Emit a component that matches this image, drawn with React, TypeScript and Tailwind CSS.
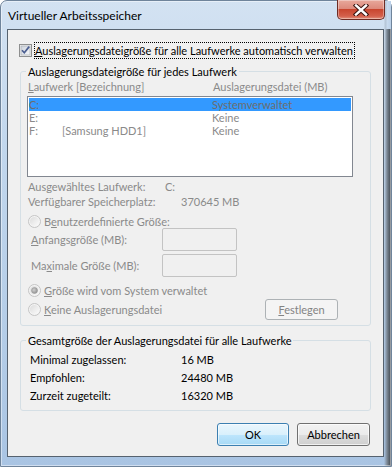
import React from "react";

function CheckBox() {
  return (
    <svg width="13" height="13" viewBox="0 0 13 13" className="shrink-0">
      <defs>
        <linearGradient id="cbg" x1="0" y1="0" x2="1" y2="1">
          <stop offset="0" stopColor="#cdd3dc" />
          <stop offset="1" stopColor="#f7f8fa" />
        </linearGradient>
      </defs>
      <rect x="0.5" y="0.5" width="12" height="12" fill="#f4f4f4" stroke="#8e8f8f" />
      <rect x="2" y="2" width="9" height="9" fill="url(#cbg)" stroke="#aeb3b9" strokeWidth="0.8" />
      <path d="M3 6.2 L5.3 8.8 L10.2 2.6" stroke="#4b5e90" strokeWidth="1.7" fill="none" strokeLinejoin="miter" />
    </svg>
  );
}

function Radio({ checked }: { checked?: boolean }) {
  return (
    <svg width="13" height="13" viewBox="0 0 13 13" className="shrink-0">
      <defs>
        <linearGradient id={checked ? "rgc" : "rgu"} x1="0" y1="0" x2="1" y2="1">
          <stop offset="0" stopColor="#dcdcdc" />
          <stop offset="1" stopColor="#fbfbfb" />
        </linearGradient>
        <radialGradient id="rdot" cx="0.4" cy="0.4" r="0.7">
          <stop offset="0" stopColor="#d0d0d0" />
          <stop offset="1" stopColor="#8a8a8a" />
        </radialGradient>
      </defs>
      <circle cx="6.5" cy="6.5" r="6" fill="#f4f4f4" stroke="#c4c4c4" />
      <circle cx="6.5" cy="6.5" r="4.6" fill={checked ? "url(#rgc)" : "url(#rgu)"} />
      {checked && <circle cx="6.5" cy="6.5" r="3" fill="url(#rdot)" stroke="#9a9a9a" strokeWidth="0.6" />}
    </svg>
  );
}

function CloseButton() {
  return (
    <div className="-mt-[1px] mr-[6px] w-[48px] h-[20px] rounded-b-[5px] border border-t-0 border-[#6e2c24] bg-[linear-gradient(to_bottom,#e8a99c,#dd8a7c_45%,#c9462f_50%,#d4604c_85%,#e2927f)] shadow-[inset_0_0_0_1px_rgba(255,255,255,0.35)] flex items-center justify-center">
      <svg width="16" height="12" viewBox="0 0 16 12">
        <path d="M3 1.5 L13 10.5 M13 1.5 L3 10.5" stroke="#3a1410" strokeWidth="4.4" strokeLinecap="square" />
        <path d="M3 1.5 L13 10.5 M13 1.5 L3 10.5" stroke="#ffffff" strokeWidth="2.4" strokeLinecap="square" />
      </svg>
    </div>
  );
}

export default function App() {
  return (
    <div className="w-[392px] h-[467px] overflow-hidden font-[Lato,'Noto_Sans',sans-serif] text-[11px] leading-[15px] text-black">
      <div className="w-[392px] h-[467px] rounded-t-[7px] border border-[#6f849b] bg-[linear-gradient(to_bottom,rgba(0,0,0,0)_18px,rgba(0,0,0,0)_467px),linear-gradient(to_right,rgba(0,0,0,0)_383px,#7d8996_386px,#2c3238_391px),linear-gradient(to_bottom,#d3e2f2,#c2d7ed_30%,#b3cce7_75%,#a9c4e3)] shadow-[inset_0_0_0_1px_rgba(255,255,255,0.45)] flex flex-col">
        <div className="h-[28px] flex items-start justify-between bg-[linear-gradient(to_right,rgba(0,0,0,0)_383px,#c9dbee_386px,#b7cde6_391px)]">
          <div className="pl-[7px] h-[28px] flex items-center text-[12px]">Virtueller Arbeitsspeicher</div>
          <CloseButton />
        </div>
        <div className="ml-[6px] w-[377px] h-[428px] border border-[#56626f] bg-[#f0f0f0] flex flex-col px-[12px]">
          {/* checkbox row */}
          <div className="mt-[12px] -ml-[1px] h-[17px] flex items-center">
            <CheckBox />
            <span className="ml-[2px] h-[17px] border border-dotted border-black flex items-center pr-[1px] whitespace-nowrap">
              <span><u>A</u>uslagerungsdateigröße für alle Laufwerke automatisch verwalten</span>
            </span>
          </div>

          {/* group 1 */}
          <div className="relative mt-[12px] h-[255px] border border-[#d5dfe5] rounded-[3px] flex flex-col">
            <span className="absolute -top-[8px] left-[5px] px-[2px] bg-[#f0f0f0] leading-[15px]">Auslagerungsdateigröße für jedes Laufwerk</span>
            <div className="mt-[7px] h-[14px] pl-[7px] flex items-center text-[#8a8a8a]">
              <span className="w-[185px]"><u>L</u>aufwerk [Bezeichnung]</span>
              <span>Auslagerungsdatei (MB)</span>
            </div>
            <div className="mt-[3px] ml-[6px] w-[326px] h-[81px] border border-[#828790] bg-white p-[1px] flex flex-col text-[#8a8a8a]">
              <div className="h-[13px] bg-[#3399ff] flex items-center leading-[13px] text-[#6d6d6d]">
                <span className="w-[33px]">C:</span>
                <span className="w-[150px]"></span>
                <span>Systemverwaltet</span>
              </div>
              <div className="h-[13px] flex items-center leading-[13px]">
                <span className="w-[33px]">E:</span>
                <span className="w-[150px]"></span>
                <span>Keine</span>
              </div>
              <div className="h-[13px] flex items-center leading-[13px]">
                <span className="w-[33px]">F:</span>
                <span className="w-[150px]">[Samsung HDD1]</span>
                <span>Keine</span>
              </div>
            </div>
            <div className="mt-[2px] h-[15px] pl-[7px] flex items-center text-[#8a8a8a]">
              <span className="w-[137px]">Ausgewähltes Laufwerk:</span>
              <span>C:</span>
            </div>
            <div className="h-[15px] pl-[7px] flex items-center text-[#8a8a8a]">
              <span className="w-[153px]">Verfügbarer Speicherplatz:</span>
              <span>370645 MB</span>
            </div>
            <div className="mt-[5px] h-[14px] pl-[7px] flex items-center text-[#8a8a8a]">
              <Radio />
              <span className="ml-[3px]">B<u>e</u>nutzerdefinierte Größe:</span>
            </div>
            <div className="h-[23px] pl-[10px] flex items-center text-[#8a8a8a]">
              <span className="w-[131px]"><u>A</u>nfangsgröße (MB):</span>
              <div className="w-[75px] h-[23px] border border-[#c3c3c3] rounded-[2px] bg-[#f0f0f0]"></div>
            </div>
            <div className="mt-[3px] h-[23px] pl-[10px] flex items-center text-[#8a8a8a]">
              <span className="w-[131px]">Ma<u>x</u>imale Größe (MB):</span>
              <div className="w-[75px] h-[23px] border border-[#c3c3c3] rounded-[2px] bg-[#f0f0f0]"></div>
            </div>
            <div className="mt-[6px] h-[14px] pl-[7px] flex items-center text-[#8a8a8a]">
              <Radio checked />
              <span className="ml-[3px]"><u>G</u>röße wird vom System verwaltet</span>
            </div>
            <div className="mt-[2px] h-[21px] pl-[7px] flex items-center text-[#8a8a8a]">
              <Radio />
              <span className="ml-[3px]"><u>K</u>eine Auslagerungsdatei</span>
              <div className="ml-auto mr-[32px] w-[73px] h-[21px] border border-[#adb2b5] rounded-[3px] bg-[#f4f4f4] flex items-center justify-center text-[#838383]">
                <span><u>F</u>estlegen</span>
              </div>
            </div>
          </div>

          {/* group 2 */}
          <div className="relative mt-[14px] h-[71px] border border-[#d5dfe5] rounded-[3px] flex flex-col">
            <span className="absolute -top-[8px] left-[5px] px-[2px] bg-[#f0f0f0] leading-[15px]">Gesamtgröße der Auslagerungsdatei für alle Laufwerke</span>
            <div className="mt-[9px] h-[18px] pl-[9px] flex items-center">
              <span className="w-[151px]">Minimal zugelassen:</span>
              <span>16 MB</span>
            </div>
            <div className="h-[18px] pl-[9px] flex items-center">
              <span className="w-[151px]">Empfohlen:</span>
              <span>24480 MB</span>
            </div>
            <div className="h-[18px] pl-[9px] flex items-center">
              <span className="w-[151px]">Zurzeit zugeteilt:</span>
              <span>16320 MB</span>
            </div>
          </div>

          {/* buttons */}
          <div className="mt-[12px] mr-[1px] flex justify-end gap-[8px]">
            <div className="w-[72px] h-[23px] border border-[#3c7fb1] rounded-[3px] bg-[linear-gradient(to_bottom,#eaf6fd,#d9f0fc_50%,#bee6fd_50%,#a7d9f5)] shadow-[inset_0_0_0_1px_rgba(255,255,255,0.6)] flex items-center justify-center">OK</div>
            <div className="w-[73px] h-[23px] border border-[#707070] rounded-[3px] bg-[linear-gradient(to_bottom,#f2f2f2,#ebebeb_50%,#dddddd_50%,#cfcfcf)] shadow-[inset_0_0_0_1px_rgba(255,255,255,0.7)] flex items-center justify-center">Abbrechen</div>
          </div>
        </div>
      </div>
    </div>
  );
}
